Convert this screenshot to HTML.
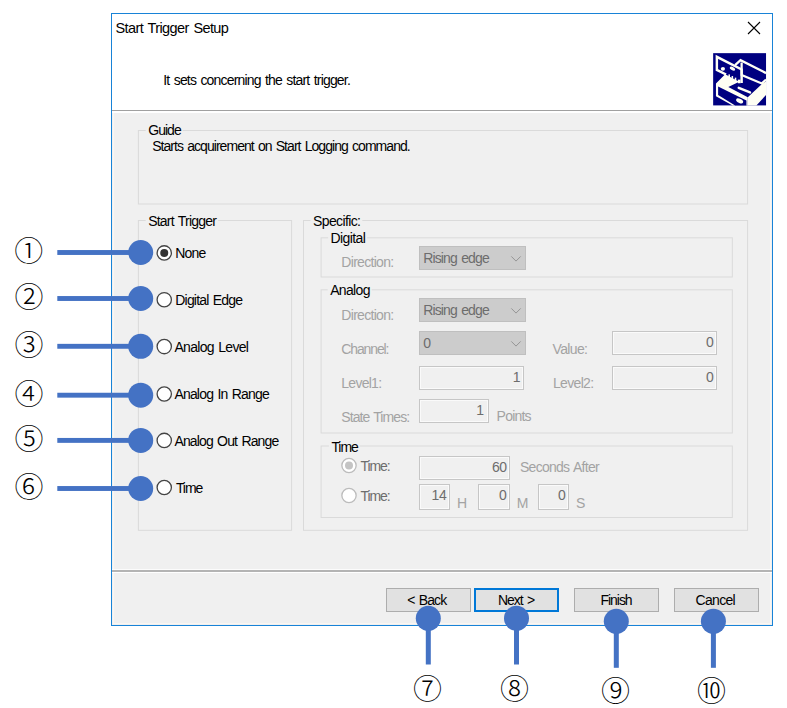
<!DOCTYPE html><html lang="en"><head><meta charset="utf-8"><title>Start Trigger Setup</title><style>
html,body{margin:0;padding:0;background:#fff;}
body{width:787px;height:708px;position:relative;overflow:hidden;font-family:"Liberation Sans",sans-serif;font-size:14px;}
.t{position:absolute;white-space:nowrap;line-height:16px;}
.abs{position:absolute;box-sizing:border-box;}
.win{left:111px;top:13px;width:662px;height:613px;border:1px solid #1883d7;background:#f0f0f0;box-shadow:inset 0 0 0 1px #f0f0f0, inset 0 0 0 2px #faf6f2;}
.hdr{left:112px;top:14px;width:660px;height:96px;background:#fff;}
.gb{border:1px solid #dcdcdc;}
.lbl{background:#f0f0f0;}
.cb{background:#cccccc;border:1px solid #bfbfbf;}
.ed{background:#f0f0f0;border:1px solid #c6c6c6;box-shadow:inset 0 0 0 1px #fafafa;}
.btn{background:#e1e1e1;border:1px solid #adadad;}
.rad{border:1.3px solid #4a4a4a;border-radius:50%;background:#fff;width:15.6px;height:15.6px;}
.num{position:absolute;font-family:"Noto Sans CJK JP","Liberation Sans",sans-serif;font-weight:300;color:#000;line-height:1;white-space:nowrap;}
</style></head><body>
<div class="abs win"></div>
<div class="abs hdr"></div>
<div class="abs" style="left:112px;top:110px;width:660px;height:1px;background:#a0a0a0"></div>
<div class="abs" style="left:112px;top:111px;width:660px;height:2px;background:#fff"></div>
<div class="abs" style="left:112px;top:569px;width:660px;height:1px;background:#fcfcfc"></div>
<div class="abs" style="left:112px;top:570px;width:660px;height:2px;background:#b4b4b4"></div>
<div class="abs" style="left:112px;top:572px;width:660px;height:1px;background:#fff"></div>
<svg class="abs" style="left:0;top:0" width="787" height="708" viewBox="0 0 787 708"><g fill="none" stroke="#dadada" stroke-width="1"><rect x="138.4" y="130.5" width="609.20" height="73.50"/><rect x="138.4" y="220.5" width="153.20" height="309.80"/><rect x="303.5" y="220.5" width="444.10" height="309.80"/><rect x="321.1" y="237.8" width="411.20" height="39.20"/><rect x="321.1" y="289.8" width="411.20" height="143.20"/><rect x="321.1" y="446.0" width="411.20" height="71.50"/></g><rect x="145.7" y="129.0" width="37.0" height="3" fill="#f0f0f0"/><rect x="145.7" y="219.0" width="72.4" height="3" fill="#f0f0f0"/><rect x="310.5" y="219.0" width="51.8" height="3" fill="#f0f0f0"/><rect x="328.1" y="236.3" width="39.1" height="3" fill="#f0f0f0"/><rect x="327.7" y="288.3" width="44.0" height="3" fill="#f0f0f0"/><rect x="328.9" y="444.5" width="30.8" height="3" fill="#f0f0f0"/></svg>
<span class="t" style="left:115.5px;top:20.38px;font-size:14.5px;color:#000;word-spacing:1.2px;letter-spacing:-0.595px;">Start Trigger Setup</span>
<svg class="abs" style="left:747px;top:21px" width="14" height="14" viewBox="0 0 14 14"><path d="M1 1 L13 13 M13 1 L1 13" stroke="#000" stroke-width="1.1" fill="none"/></svg>
<svg class="abs" style="left:708px;top:48px" width="64" height="64" viewBox="0 0 708 708"><rect x="57" y="57" width="585" height="578" fill="#000080"/><g fill="#fffff4" stroke="none"><!-- white top face of lower box + floor --><polygon points="88,392 190,290 345,372 225,432 440,545 440,635 272,635 88,535"/><!-- big white diagonal band at right --><polygon points="440,545 600,395 642,370 642,520 535,635 440,635"/></g><g fill="#000080"><!-- front face of lower box --><polygon points="112,425 425,580 425,635 300,635 112,520"/></g><ellipse cx="350" cy="585" rx="42" ry="22" transform="rotate(27 350 585)" fill="#fffff4"/><!-- card --><polygon points="98,98 368,236 368,380 345,380 345,358 322,358 322,346 300,346 300,332 278,332 278,320 256,320 256,306 234,306 234,296 212,296 98,242" fill="#000080"/><polyline points="200,293 98,242 98,98 372,238 372,388" fill="none" stroke="#fffff4" stroke-width="27" stroke-linejoin="miter"/><ellipse cx="165" cy="230" rx="23" ry="21" fill="#fffff4"/><ellipse cx="272" cy="228" rx="33" ry="18" transform="rotate(27 270 226)" fill="#fffff4"/><g fill="#fffff4"><rect x="226" y="292" width="17" height="32"/><rect x="261" y="310" width="17" height="32"/><rect x="296" y="328" width="17" height="34"/><rect x="330" y="350" width="30" height="40"/></g><!-- slot in board --><line x1="340" y1="440" x2="465" y2="492" stroke="#fffff4" stroke-width="27" stroke-linecap="round"/><!-- right long bar outlines --><polyline points="300,190 360,135 642,278" fill="none" stroke="#fffff4" stroke-width="25"/><polyline points="372,160 372,300 595,392 642,350" fill="none" stroke="#fffff4" stroke-width="25"/></svg>
<span class="t" style="left:163.3px;top:71.65px;font-size:14px;color:#000;word-spacing:1.2px;letter-spacing:-0.816px;">It sets concerning the start trigger.</span>
<span class="t" style="left:148.2px;top:122.35px;font-size:14px;color:#000;letter-spacing:-0.952px;">Guide</span>
<span class="t" style="left:152.2px;top:137.65px;font-size:14px;color:#000;word-spacing:1.2px;letter-spacing:-0.950px;">Starts acquirement on Start Logging command.</span>
<span class="t" style="left:148.2px;top:213.15px;font-size:14px;color:#000;word-spacing:1.2px;letter-spacing:-0.787px;">Start Trigger</span>
<span class="t" style="left:313.0px;top:212.65px;font-size:14px;color:#000;letter-spacing:-0.614px;">Specific:</span>
<span class="t" style="left:330.6px;top:230.35px;font-size:14px;color:#000;letter-spacing:-0.601px;">Digital</span>
<span class="t" style="left:330.2px;top:282.05px;font-size:14px;color:#000;letter-spacing:-0.666px;">Analog</span>
<span class="t" style="left:331.4px;top:438.55px;font-size:14px;color:#000;letter-spacing:-1.048px;">Time</span>
<span class="t" style="left:175.3px;top:245.05px;font-size:14px;color:#000;letter-spacing:-0.792px;">None</span>
<span class="t" style="left:175.3px;top:291.85px;font-size:14px;color:#000;word-spacing:1.2px;letter-spacing:-0.817px;">Digital Edge</span>
<span class="t" style="left:174.4px;top:338.75px;font-size:14px;color:#000;word-spacing:1.2px;letter-spacing:-0.688px;">Analog Level</span>
<span class="t" style="left:174.4px;top:386.15px;font-size:14px;color:#000;word-spacing:1.2px;letter-spacing:-0.814px;">Analog In Range</span>
<span class="t" style="left:174.4px;top:432.55px;font-size:14px;color:#000;word-spacing:1.2px;letter-spacing:-0.850px;">Analog Out Range</span>
<span class="t" style="left:175.9px;top:479.65px;font-size:14px;color:#000;letter-spacing:-1.073px;">Time</span>
<svg class="abs" style="left:0;top:0" width="787" height="708" viewBox="0 0 787 708"><circle cx="164.25" cy="252.90" r="7.15" fill="#fff" stroke="#444" stroke-width="1.3"/><circle cx="164.25" cy="252.90" r="4" fill="#333"/><circle cx="164.25" cy="299.70" r="7.15" fill="#fff" stroke="#444" stroke-width="1.3"/><circle cx="164.25" cy="346.60" r="7.15" fill="#fff" stroke="#444" stroke-width="1.3"/><circle cx="164.25" cy="394.00" r="7.15" fill="#fff" stroke="#444" stroke-width="1.3"/><circle cx="164.25" cy="440.40" r="7.15" fill="#fff" stroke="#444" stroke-width="1.3"/><circle cx="164.25" cy="487.50" r="7.15" fill="#fff" stroke="#444" stroke-width="1.3"/><circle cx="349" cy="465.5" r="7.15" fill="#fff" stroke="#bcbcbc" stroke-width="1.3"/><circle cx="349" cy="465.5" r="4" fill="#c4c4c4"/><circle cx="349" cy="495.5" r="7.15" fill="#fff" stroke="#bcbcbc" stroke-width="1.3"/></svg>
<span class="t" style="left:341.3px;top:254.45px;font-size:14px;color:#a3a3a3;letter-spacing:-0.694px;">Direction:</span>
<div class="abs cb" style="left:419px;top:246px;width:107px;height:24px"></div>
<span class="t" style="left:423.2px;top:249.85px;font-size:14px;color:#6d6d6d;word-spacing:1.2px;letter-spacing:-0.858px;">Rising edge</span>
<svg class="abs" style="left:508.70000000000005px;top:253.5px" width="14" height="10" viewBox="0 0 14 10"><path d="M2.3 2.4 L7 7.1 L11.7 2.4" stroke="#959595" stroke-width="1" fill="none"/></svg>
<span class="t" style="left:341.3px;top:306.55px;font-size:14px;color:#a3a3a3;letter-spacing:-0.694px;">Direction:</span>
<div class="abs cb" style="left:419px;top:298px;width:107px;height:24px"></div>
<span class="t" style="left:423.2px;top:301.85px;font-size:14px;color:#6d6d6d;word-spacing:1.2px;letter-spacing:-0.858px;">Rising edge</span>
<svg class="abs" style="left:508.70000000000005px;top:305.5px" width="14" height="10" viewBox="0 0 14 10"><path d="M2.3 2.4 L7 7.1 L11.7 2.4" stroke="#959595" stroke-width="1" fill="none"/></svg>
<span class="t" style="left:341.3px;top:340.85px;font-size:14px;color:#a3a3a3;letter-spacing:-1.131px;">Channel:</span>
<div class="abs cb" style="left:419px;top:331px;width:107px;height:24px"></div>
<span class="t" style="left:423.2px;top:335.15px;font-size:14px;color:#6d6d6d;letter-spacing:-0.397px;">0</span>
<svg class="abs" style="left:508.70000000000005px;top:338.5px" width="14" height="10" viewBox="0 0 14 10"><path d="M2.3 2.4 L7 7.1 L11.7 2.4" stroke="#959595" stroke-width="1" fill="none"/></svg>
<span class="t" style="left:552.5px;top:340.85px;font-size:14px;color:#a3a3a3;letter-spacing:-0.629px;">Value:</span>
<div class="abs ed" style="left:612px;top:331px;width:105px;height:24px"></div>
<span class="t" style="left:612px;width:101.4px;text-align:right;top:334.15px;color:#6d6d6d;letter-spacing:-0.5px">0</span>
<span class="t" style="left:341.3px;top:375.15px;font-size:14px;color:#a3a3a3;letter-spacing:-0.737px;">Level1:</span>
<div class="abs ed" style="left:419px;top:366px;width:105px;height:24px"></div>
<span class="t" style="left:419px;width:101.0px;text-align:right;top:369.15px;color:#6d6d6d;letter-spacing:-0.5px">1</span>
<span class="t" style="left:553.0px;top:375.15px;font-size:14px;color:#a3a3a3;letter-spacing:-0.679px;">Level2:</span>
<div class="abs ed" style="left:612px;top:366px;width:105px;height:24px"></div>
<span class="t" style="left:612px;width:101.4px;text-align:right;top:369.15px;color:#6d6d6d;letter-spacing:-0.5px">0</span>
<span class="t" style="left:341.3px;top:408.65px;font-size:14px;color:#a3a3a3;word-spacing:1.2px;letter-spacing:-0.926px;">State Times:</span>
<div class="abs ed" style="left:419px;top:399px;width:70px;height:24px"></div>
<span class="t" style="left:419px;width:64.6px;text-align:right;top:402.25px;color:#6d6d6d;letter-spacing:-0.5px">1</span>
<span class="t" style="left:496.6px;top:408.35px;font-size:14px;color:#a3a3a3;letter-spacing:-0.787px;">Points</span>
<span class="t" style="left:360.4px;top:458.15px;font-size:14px;color:#6d6d6d;letter-spacing:-1.037px;">Time:</span>
<span class="t" style="left:360.4px;top:488.15px;font-size:14px;color:#6d6d6d;letter-spacing:-1.037px;">Time:</span>
<div class="abs ed" style="left:419px;top:456px;width:91px;height:24px"></div>
<span class="t" style="left:419px;width:87.6px;text-align:right;top:459.15px;color:#6d6d6d;letter-spacing:-0.5px">60</span>
<span class="t" style="left:520.0px;top:459.15px;font-size:14px;color:#a3a3a3;word-spacing:1.2px;letter-spacing:-0.729px;">Seconds After</span>
<div class="abs ed" style="left:419px;top:484px;width:31px;height:26px"></div>
<span class="t" style="left:419px;width:27.2px;text-align:right;top:486.95px;color:#6d6d6d;letter-spacing:-0.5px">14</span>
<span class="t" style="left:456.9px;top:495.05px;font-size:14px;color:#a3a3a3;letter-spacing:-1.325px;">H</span>
<div class="abs ed" style="left:478px;top:484px;width:32px;height:26px"></div>
<span class="t" style="left:478px;width:28.2px;text-align:right;top:486.65px;color:#6d6d6d;letter-spacing:-0.5px">0</span>
<span class="t" style="left:516.7px;top:494.95px;font-size:14px;color:#a3a3a3;letter-spacing:-2.172px;">M</span>
<div class="abs ed" style="left:538px;top:484px;width:31px;height:26px"></div>
<span class="t" style="left:538px;width:27.2px;text-align:right;top:486.65px;color:#6d6d6d;letter-spacing:-0.5px">0</span>
<span class="t" style="left:575.9px;top:494.95px;font-size:14px;color:#a3a3a3;letter-spacing:-1.544px;">S</span>
<div class="abs btn" style="left:386px;top:588px;width:85px;height:24px"></div>
<span class="t" style="left:407.2px;top:592.05px;font-size:14px;color:#000;word-spacing:1.2px;letter-spacing:-0.865px;">&lt; Back</span>
<div class="abs btn" style="left:474px;top:588px;width:85px;height:24px;border:2px solid #0078d7"></div>
<span class="t" style="left:497.9px;top:592.05px;font-size:14px;color:#000;word-spacing:1.2px;letter-spacing:-0.977px;">Next &gt;</span>
<div class="abs btn" style="left:574px;top:588px;width:85px;height:24px"></div>
<span class="t" style="left:600.5px;top:592.05px;font-size:14px;color:#000;letter-spacing:-1.043px;">Finish</span>
<div class="abs btn" style="left:674px;top:588px;width:85px;height:24px"></div>
<span class="t" style="left:695.5px;top:592.05px;font-size:14px;color:#000;letter-spacing:-0.682px;">Cancel</span>
<svg class="abs" style="left:0;top:0" width="787" height="708" viewBox="0 0 787 708"><rect x="57.3" y="250.05" width="84" height="4.9" fill="#4472c4"/><circle cx="140.7" cy="252.5" r="12.5" fill="#4472c4"/><rect x="57.3" y="296.05" width="84" height="4.9" fill="#4472c4"/><circle cx="140.7" cy="298.5" r="12.5" fill="#4472c4"/><rect x="57.3" y="343.85" width="84" height="4.9" fill="#4472c4"/><circle cx="140.7" cy="346.3" r="12.5" fill="#4472c4"/><rect x="57.3" y="392.75" width="84" height="4.9" fill="#4472c4"/><circle cx="140.7" cy="395.2" r="12.5" fill="#4472c4"/><rect x="57.3" y="437.95" width="84" height="4.9" fill="#4472c4"/><circle cx="140.7" cy="440.4" r="12.5" fill="#4472c4"/><rect x="57.3" y="486.05" width="84" height="4.9" fill="#4472c4"/><circle cx="140.7" cy="488.5" r="12.5" fill="#4472c4"/><rect x="425.8" y="618.3" width="5" height="46.2" fill="#4472c4"/><circle cx="428.3" cy="618.3" r="12.5" fill="#4472c4"/><rect x="514.0" y="618.3" width="5" height="46.2" fill="#4472c4"/><circle cx="516.5" cy="618.3" r="12.5" fill="#4472c4"/><rect x="613.8" y="621.3" width="5" height="46.5" fill="#4472c4"/><circle cx="616.3" cy="621.3" r="12.5" fill="#4472c4"/><rect x="710.9" y="621.3" width="5" height="46.5" fill="#4472c4"/><circle cx="713.4" cy="621.3" r="12.5" fill="#4472c4"/></svg>
<span class="num" style="font-size:29px;left:14.29px;top:234.67px;width:29px;text-align:center">①</span>
<span class="num" style="font-size:29px;left:14.50px;top:280.88px;width:29px;text-align:center">②</span>
<span class="num" style="font-size:29px;left:14.50px;top:329.34px;width:29px;text-align:center">③</span>
<span class="num" style="font-size:29px;left:14.50px;top:377.92px;width:29px;text-align:center">④</span>
<span class="num" style="font-size:29px;left:14.50px;top:422.84px;width:29px;text-align:center">⑤</span>
<span class="num" style="font-size:29px;left:14.50px;top:470.84px;width:29px;text-align:center">⑥</span>
<span class="num" style="font-size:29px;left:412.98px;top:672.88px;width:29px;text-align:center">⑦</span>
<span class="num" style="font-size:29px;left:500.02px;top:672.88px;width:29px;text-align:center">⑧</span>
<span class="num" style="font-size:29px;left:600.98px;top:674.88px;width:29px;text-align:center">⑨</span>
<span class="num" style="font-size:29px;left:697.02px;top:674.88px;width:29px;text-align:center">⑩</span>
</body></html>
